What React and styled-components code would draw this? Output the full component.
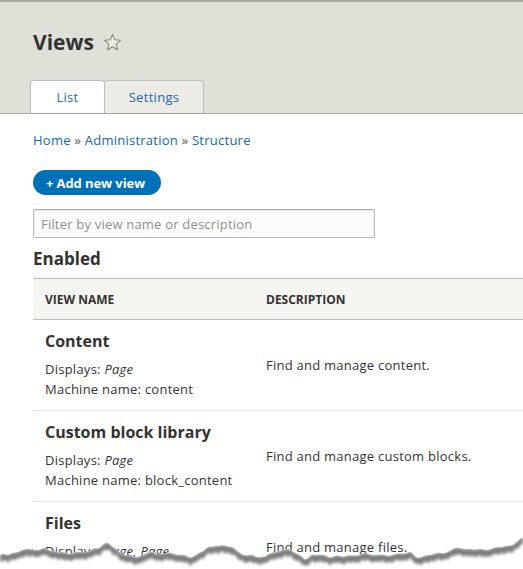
import React from "react";
import styled, { createGlobalStyle } from "styled-components";

const GlobalStyle = createGlobalStyle`
  html, body {
    margin: 0;
    padding: 0;
    background: #fff;
    overflow: hidden;
  }
  body {
    font-family: "Open Sans", "Noto Sans", sans-serif;
    color: #333;
  }
`;

const views = [
  { name: "Content", machine: "content", description: "Find and manage content." },
  { name: "Custom block library", machine: "block_content", description: "Find and manage custom blocks." },
  { name: "Files", machine: "files", description: "Find and manage files.", displays: "Page, Page" },
];

// torn paper edge, page coordinates
const tearPoints = [
  [0, 555], [8, 554], [18, 552], [27, 548], [35, 550], [45, 547], [52, 551], [62, 553],
  [80, 553], [92, 550], [100, 547], [107, 542], [113, 547], [120, 552], [132, 556],
  [140, 557], [150, 552], [160, 553], [175, 554], [190, 557], [200, 552], [207, 548],
  [215, 545], [225, 546], [232, 548], [245, 555], [265, 557], [275, 551], [288, 549],
  [296, 553], [305, 560], [312, 554], [330, 557], [350, 556], [365, 554], [380, 555],
  [395, 554], [410, 552], [418, 557], [428, 556], [438, 553], [448, 551], [460, 548],
  [472, 550], [482, 549], [495, 548], [505, 547], [512, 545], [518, 540], [523, 537],
];

const EDGE_TOP = 529;

const roughLine = (() => {
  const out = [];
  for (let i = 0; i < tearPoints.length - 1; i++) {
    const [x1, y1] = tearPoints[i];
    const [x2, y2] = tearPoints[i + 1];
    const steps = Math.max(1, Math.round((x2 - x1) / 3));
    for (let s = 0; s < steps; s++) {
      const t = s / steps;
      const x = x1 + (x2 - x1) * t;
      const jitter = Math.sin(x * 1.7) * 0.8 + Math.sin(x * 4.3) * 0.5;
      out.push([x, y1 + (y2 - y1) * t + jitter - EDGE_TOP]);
    }
  }
  const [lx, ly] = tearPoints[tearPoints.length - 1];
  out.push([lx, ly - EDGE_TOP]);
  return out;
})();

const linePath = roughLine.map(([x, y], i) => `${i ? "L" : "M"}${x.toFixed(1)},${y.toFixed(1)}`).join(" ");
const belowPath = `${linePath} L523,40 L0,40 Z`;
const bandPath =
  linePath +
  " " +
  roughLine
    .slice()
    .reverse()
    .map(([x, y]) => `L${x.toFixed(1)},${(y + 7 + Math.sin(x * 0.9) * 1.2).toFixed(1)}`)
    .join(" ") +
  " Z";

const Page = styled.div`
  position: relative;
  width: 523px;
  height: 569px;
  overflow: hidden;
`;

const Header = styled.header`
  background: #e0e0d8;
  border-top: 2px solid #a9a9a4;
  border-bottom: 1px solid #a6a69e;
  padding: 27px 0 0 30px;
`;

const TitleRow = styled.div`
  display: flex;
  align-items: center;
  gap: 9px;
  margin-left: 3px;
`;

const Title = styled.h1`
  margin: 0;
  font-size: 21px;
  line-height: 27px;
  font-weight: 700;
  color: #333;
`;

const Tabs = styled.ul`
  display: flex;
  list-style: none;
  margin: 24px 0 0;
  padding: 0;
`;

const Tab = styled.li`
  box-sizing: border-box;
  width: ${(p) => p.$width}px;
  height: 33px;
  margin-left: ${(p) => (p.$first ? 0 : -1)}px;
  display: flex;
  align-items: center;
  justify-content: center;
  border: 1px solid #bfbfba;
  border-bottom: none;
  border-radius: 4px 4px 0 0;
  background: ${(p) => (p.$active ? "#fff" : "#ecebe6")};
  color: #1f6aa5;
  font-size: 13px;
  letter-spacing: 0.3px;
`;

const Content = styled.main`
  padding-left: 33px;
`;

const Breadcrumb = styled.nav`
  margin-top: 16px;
  font-size: 13px;
  line-height: 20px;
  letter-spacing: 0.25px;
  color: #555;

  a {
    color: #0f68a8;
    text-decoration: none;
  }
`;

const AddButton = styled.button`
  display: block;
  margin-top: 20px;
  height: 25px;
  padding: 0 16px 0 13px;
  border: none;
  border-radius: 20px;
  background: #0071b8;
  color: #fff;
  font-family: inherit;
  font-size: 13px;
  font-weight: 700;
  letter-spacing: -0.1px;
`;

const Filter = styled.input`
  display: block;
  box-sizing: border-box;
  margin-top: 14px;
  width: 342px;
  height: 29px;
  padding: 0 7px;
  border: 1px solid #b8b8b5;
  border-top-color: #a9a9a6;
  border-radius: 2px;
  background: #fcfcfa;
  box-shadow: inset 0 1px 2px rgba(0, 0, 0, 0.1);
  font-family: inherit;
  font-size: 13px;
  letter-spacing: 0.2px;

  &::placeholder {
    color: #8d8f93;
  }
`;

const Section = styled.h2`
  margin: 10px 0 0;
  font-size: 17px;
  line-height: 22px;
  font-weight: 700;
  color: #333;
`;

const Table = styled.table`
  margin-top: 8px;
  width: 620px;
  table-layout: fixed;
  border-collapse: collapse;
  font-size: 13px;
  letter-spacing: 0.25px;
`;

const Th = styled.th`
  width: ${(p) => (p.$width ? `${p.$width}px` : "auto")};
  height: 40px;
  padding: 0 12px;
  text-align: left;
  background: #f5f5f2;
  border-top: 1px solid #bfbfba;
  border-bottom: 1px solid #bfbfba;
  font-size: 12px;
  font-weight: 700;
  letter-spacing: 0;
  text-transform: uppercase;
  color: #333;
`;

const Row = styled.tr`
  border-bottom: 1px solid #e6e4df;
`;

const Td = styled.td`
  padding: 10px 12px 11px;
  vertical-align: middle;
  color: #333;
  line-height: 20px;
`;

const ViewName = styled.h3`
  margin: 0 0 7px;
  font-size: 16px;
  line-height: 22px;
  font-weight: 700;
  letter-spacing: 0;
  color: #333;
`;

const Meta = styled.div`
  font-size: 13px;
  line-height: 20px;

  em {
    font-style: italic;
  }
`;

const Torn = styled.svg`
  position: absolute;
  left: 0;
  top: ${EDGE_TOP}px;
  width: 523px;
  height: 40px;
`;

const Star = () => (
  <svg width="19" height="19" viewBox="0 0 20 20">
    <path
      d="M10 1.6l2.4 5.6 6 .5-4.6 4 1.4 5.9L10 14.5l-5.2 3.1 1.4-5.9-4.6-4 6-.5z"
      fill="#ebebe6"
      stroke="#85857e"
      strokeWidth="1.1"
      strokeLinejoin="round"
    />
  </svg>
);

export default function App() {
  return (
    <Page>
      <GlobalStyle />
      <Header>
        <TitleRow>
          <Title>Views</Title>
          <Star />
        </TitleRow>
        <Tabs>
          <Tab $first $active $width={75}>List</Tab>
          <Tab $width={100}>Settings</Tab>
        </Tabs>
      </Header>
      <Content>
        <Breadcrumb>
          <a href="#">Home</a> » <a href="#">Administration</a> » <a href="#">Structure</a>
        </Breadcrumb>
        <AddButton>+ Add new view</AddButton>
        <Filter placeholder="Filter by view name or description" />
        <Section>Enabled</Section>
        <Table>
          <thead>
            <tr>
              <Th $width={197}>View name</Th>
              <Th>Description</Th>
            </tr>
          </thead>
          <tbody>
            {views.map((v) => (
              <Row key={v.machine}>
                <Td>
                  <ViewName>{v.name}</ViewName>
                  <Meta>
                    Displays: <em>{v.displays || "Page"}</em>
                  </Meta>
                  <Meta>Machine name: {v.machine}</Meta>
                </Td>
                <Td>{v.description}</Td>
              </Row>
            ))}
          </tbody>
        </Table>
      </Content>
      <Torn viewBox="0 0 523 40" preserveAspectRatio="none">
        <defs>
          <clipPath id="below">
            <path d={belowPath} />
          </clipPath>
          <filter id="soft" x="-5%" y="-50%" width="110%" height="200%">
            <feGaussianBlur stdDeviation="1.6" />
          </filter>
        </defs>
        <path d={belowPath} fill="#fff" />
        <g clipPath="url(#below)">
          <path d={bandPath} fill="#7d7d7d" filter="url(#soft)" />
        </g>
      </Torn>
    </Page>
  );
}
